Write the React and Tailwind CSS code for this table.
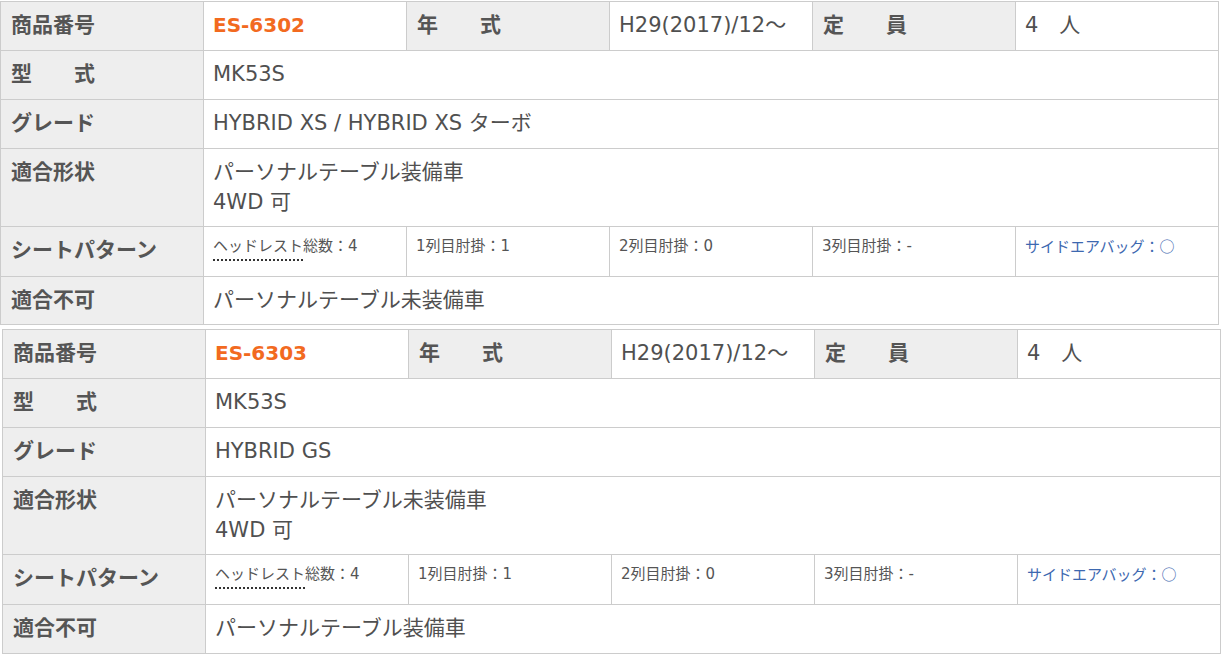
import React from "react";

const FONT = { fontFamily: '"DejaVu Sans", "Noto Sans CJK JP", sans-serif' };
const CJK = { fontFamily: '"Noto Sans CJK JP", sans-serif' };

const tables = [
  {
    no: "ES-6302",
    year: "H29(2017)/12～",
    cap: "4　人",
    model: "MK53S",
    grade: "HYBRID XS / HYBRID XS ターボ",
    shape: ["パーソナルテーブル装備車", "4WD 可"],
    ng: "パーソナルテーブル未装備車",
    wrap: "ml-0 mt-[1px]",
    lastH: "h-[48px]",
  },
  {
    no: "ES-6303",
    year: "H29(2017)/12～",
    cap: "4　人",
    model: "MK53S",
    grade: "HYBRID GS",
    shape: ["パーソナルテーブル未装備車", "4WD 可"],
    ng: "パーソナルテーブル装備車",
    wrap: "ml-[2px] mt-[4px]",
    lastH: "h-[49px]",
  },
];

function Label({ children }) {
  return (
    <div className="bg-[#eeeeee] border-r border-[#cccccc] pl-[10px] pt-[8px] text-[21px] leading-[30px] font-bold text-[#555555] whitespace-pre">
      {children}
    </div>
  );
}

function Value({ children, span }) {
  return (
    <div
      className={`bg-white border-r border-[#cccccc] pl-[9px] pt-[8px] text-[21px] leading-[30px] text-[#505050] ${
        span ? "col-span-5" : ""
      }`}
    >
      {children}
    </div>
  );
}

function Seat({ children, blue }) {
  return (
    <div
      className={`bg-white border-r border-[#cccccc] pl-[9px] pt-[9px] text-[15px] leading-[20px] ${
        blue ? "text-[#3d68b0]" : "text-[#555555]"
      }`}
    >
      {children}
    </div>
  );
}

const row = "grid grid-cols-[repeat(6,203px)] border-b border-[#cccccc]";

function Table({ t }) {
  return (
    <div className={`${t.wrap} w-[1219px] border-l border-t border-[#cccccc]`} style={FONT}>
      <div className={`${row} h-[49px]`}>
        <Label>商品番号</Label>
        <div className="bg-white border-r border-[#cccccc] pl-[9px] pt-[8px] text-[20px] leading-[30px] font-bold text-[#f26a1f]">
          {t.no}
        </div>
        <Label>{"年　　式"}</Label>
        <Value>{t.year}</Value>
        <Label>{"定　　員"}</Label>
        <Value>{t.cap}</Value>
      </div>
      <div className={`${row} h-[49px]`}>
        <Label>{"型　　式"}</Label>
        <Value span>{t.model}</Value>
      </div>
      <div className={`${row} h-[49px]`}>
        <Label>グレード</Label>
        <Value span>{t.grade}</Value>
      </div>
      <div className={`${row} h-[78px]`}>
        <Label>適合形状</Label>
        <Value span>
          {t.shape.map((s) => (
            <div key={s}>{s}</div>
          ))}
        </Value>
      </div>
      <div className={`${row} h-[50px]`}>
        <Label>シートパターン</Label>
        <Seat>
          <span className="inline-block border-b-2 border-dotted border-[#333333] leading-[20px] pb-[3px]">ヘッドレスト</span>
          <span>総数：4</span>
        </Seat>
        <Seat>1列目肘掛：1</Seat>
        <Seat>2列目肘掛：0</Seat>
        <Seat>3列目肘掛：-</Seat>
        <Seat blue>
          サイドエアバッグ：<span style={CJK}>○</span>
        </Seat>
      </div>
      <div className={`${row} ${t.lastH}`}>
        <Label>適合不可</Label>
        <Value span>{t.ng}</Value>
      </div>
    </div>
  );
}

export default function App() {
  return (
    <div className="w-[1224px] h-[660px] bg-white overflow-hidden">
      {tables.map((t) => (
        <Table key={t.no} t={t} />
      ))}
    </div>
  );
}
